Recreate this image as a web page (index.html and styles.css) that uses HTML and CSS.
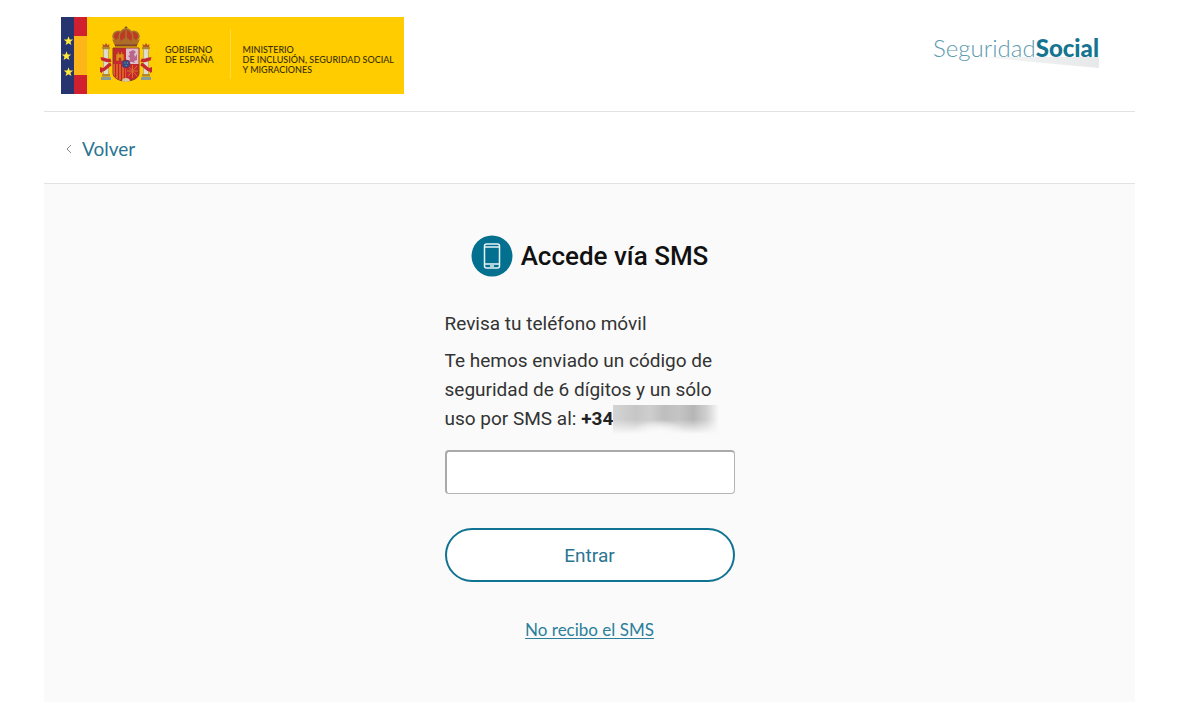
FILE: index.html
```html
<!DOCTYPE html>
<html lang="es">
<head>
    <meta charset="UTF-8">
    <meta name="viewport" content="width=device-width, initial-scale=1.0">
    <title>Accede vía SMS - Seguridad Social</title>
    <link rel="stylesheet" href="styles.css">
</head>
<body>
    <div class="page">
        <header class="header">
            <div class="gob-logo">
                <svg class="gob-emblem" viewBox="0 0 104 77" aria-hidden="true">
                    <!-- EU and Spanish flags -->
                    <rect width="13" height="77" fill="#26346f"></rect>
                    <rect x="13" width="13" height="19" fill="#d01f2e"></rect>
                    <rect x="13" y="19" width="13" height="39" fill="#fcb61a"></rect>
                    <rect x="13" y="58" width="13" height="19" fill="#d01f2e"></rect>
                    <g fill="#ffe93b">
                        <path id="star" d="M7.500 19.200l1.200 3.200 3.500.1-2.700 2.200.9 3.400-2.900-1.900-2.900 1.900.9-3.400-2.700-2.200 3.500-.1z"></path>
                        <use href="#star" x="-2" y="15"></use>
                        <use href="#star" y="31"></use>
                    </g>
                    <!-- pillars -->
                    <g fill="#e0dccb" stroke="#8c8a75" stroke-width=".5">
                        <rect x="42.500" y="32" width="5" height="27"></rect>
                        <rect x="82.500" y="32" width="5" height="27"></rect>
                    </g>
                    <g fill="#b3872b">
                        <rect x="41" y="30" width="8" height="2"></rect>
                        <rect x="81" y="30" width="8" height="2"></rect>
                        <rect x="41" y="57" width="8" height="2.500"></rect>
                        <rect x="81" y="57" width="8" height="2.500"></rect>
                    </g>
                    <path d="M42 30l-.5-3 2 1.200 1.500-2.200 1.500 2.200 2-1.200-.5 3zM82 30l-.5-3 2 1.200 1.500-2.200 1.500 2.200 2-1.200-.5 3z" fill="#b5532a"></path>
                    <g fill="#8a9c96">
                        <rect x="40" y="60" width="10" height="3"></rect>
                        <rect x="80" y="60" width="10" height="3"></rect>
                    </g>
                    <!-- ribbons -->
                    <g fill="none" stroke="#c5282f" stroke-width="3.500">
                        <path d="M40 42c3-1 5 3 10 1M40 53c4 1 5-4 10-6"></path>
                        <path d="M90 42c-3-1-5 3-10 1M90 53c-4 1-5-4-10-6"></path>
                    </g>
                    <path d="M39 50l3 1-1 5-2-1zM91 50l-3 1 1 5 2-1z" fill="#c5282f"></path>
                    <!-- shield -->
                    <path d="M52 31h26v25c0 5-6 8-13 8s-13-3-13-8z" fill="#c5282f" stroke="#8a3c20"></path>
                    <path d="M65 31.500h12.500V47H65z" fill="#dfc0cb"></path>
                    <path d="M52.500 47H65v16.500c-7 0-12.500-3-12.500-7.500z" fill="#e58c20"></path>
                    <path d="M54.500 47v13M57.500 47v15M60.500 47v16M63.500 47v17" stroke="#c5202d" stroke-width="1.800"></path>
                    <path d="M55 44v-7h1.500v-2H58v2h2v-2h1.500v2H63v7h-3v-3h-2v3z" fill="#e08a1e" stroke="#a03c18" stroke-width=".5"></path>
                    <path d="M68 45l1-4-2-2 2-1-1-3 4-2 3 2-2 2 1 3 2-3v6l-3 1 1 2-3-1z" fill="#b9658c"></path>
                    <path d="M67 49l9 10M76 49l-9 10M71.500 48v13M66 54h11" stroke="#d9702a"></path>
                    <path d="M61 64c0-4 8-4 8 0l-4 1z" fill="#d8c8a0"></path>
                    <circle cx="65" cy="47" r="4" fill="#2c4f8a" stroke="#8a2a50"></circle>
                    <path d="M63.500 45.500h1v1h-1zM66 45.500h1v1h-1zM64.700 48h1v1h-1z" fill="#a9a98f"></path>
                    <!-- crown -->
                    <path d="M55 28l-3-8c0-5 5-7 8-5 1-2 3-3 5-3s4 1 5 3c3-2 8 0 8 5l-3 8z" fill="#bd3b25"></path>
                    <path d="M55 25l-3-5c0-5 5-7 8-5 1-2 3-3 5-3s4 1 5 3c3-2 8 0 8 5l-3 5M65 12v13M60 15c-2 2-2 6-1 9M70 15c2 2 2 6 1 9" fill="none" stroke="#a7722a" stroke-width="1.500"></path>
                    <path d="M51 22l3 2 3-3 3 3 5-4 5 4 3-3 3 3 3-2-3 7H54z" fill="#ad6d28"></path>
                    <path d="M54 28.500h22" stroke="#80412a" stroke-width="2"></path>
                    <path d="M65 9v4M63.500 10.500h3" stroke="#8b582a"></path>
                </svg>
                <p class="gob-text">GOBIERNO<br>DE ESPAÑA</p>
                <p class="gob-text gob-ministry">MINISTERIO<br>DE INCLUSIÓN, SEGURIDAD SOCIAL<br>Y MIGRACIONES</p>
            </div>
            <div class="ss-logo">
                <svg class="ss-swoosh" viewBox="0 0 120 11" preserveAspectRatio="none" aria-hidden="true">
                    <defs>
                        <linearGradient id="swoosh">
                            <stop offset="0" stop-color="#f6f7f7"></stop>
                            <stop offset="1" stop-color="#e6e8e9"></stop>
                        </linearGradient>
                    </defs>
                    <path d="M0 0h120v11z" fill="url(#swoosh)"></path>
                </svg>
                <span class="ss-name">Seguridad<strong>Social</strong></span>
            </div>
        </header>

        <nav class="nav">
            <a class="back" href="#">
                <svg class="back-icon" viewBox="0 0 6 10" fill="none" stroke="#8a8a8a" aria-hidden="true">
                    <path d="M5 1L1 5l4 4"></path>
                </svg>
                Volver
            </a>
        </nav>

        <main class="main">
            <h1 class="title">
                <svg class="title-icon" viewBox="0 0 42 42" aria-hidden="true">
                    <circle cx="21" cy="21" r="20.500" fill="#04708f"></circle>
                    <g fill="none" stroke="#e6f3f6" stroke-width="1.500">
                        <rect x="13.500" y="9" width="15" height="24" rx="2"></rect>
                        <path d="M13.500 12h15M13.500 29h15M19 31h4"></path>
                    </g>
                </svg>
                Accede vía SMS
            </h1>
            <form class="form">
                <p class="lead">Revisa tu teléfono móvil</p>
                <label class="text" for="code">Te hemos enviado un código de seguridad de 6 dígitos y un sólo uso por SMS al: <strong class="phone">+34<span class="phone-mask"></span></strong></label>
                <input class="code" type="text" id="code" inputmode="numeric" maxlength="6">
                <button class="submit" type="submit">Entrar</button>
                <a class="help" href="#">No recibo el SMS</a>
            </form>
        </main>
    </div>
</body>
</html>
```

FILE: styles.css
```css
* {
    margin: 0;
    padding: 0;
    box-sizing: border-box;
}

body {
    background-color: #fff;
    color: #333;
    font-family: Roboto, Arial, sans-serif;
    font-size: 19px;
}

.page {
    min-height: 100vh;
    margin: 0 65px 0 44px;
    display: flex;
    flex-direction: column;
}

.header {
    display: flex;
    align-items: flex-start;
    justify-content: space-between;
    padding: 17px 36px 17px 17px;
    border-bottom: 1px solid #e2e2e2;
}

.gob-logo {
    display: flex;
    align-items: center;
    padding-right: 10px;
    background-color: #fc0;
}

.gob-emblem {
    display: block;
    width: 104px;
    height: 77px;
}

.gob-text {
    color: #3a2f00;
    font-family: Lato, sans-serif;
    font-size: 9px;
    font-weight: 500;
    line-height: 10px;
    height: 30px;
    margin-top: 8px;
}

.gob-ministry {
    position: relative;
    margin-left: 16px;
    padding-left: 13px;
}

.gob-ministry::before {
    content: "";
    position: absolute;
    left: 0;
    top: -16px;
    width: 1px;
    height: 50px;
    background-color: #ffd83d;
}

.ss-logo {
    position: relative;
    margin-top: 16px;
    font-family: Lato, sans-serif;
    font-size: 24px;
    line-height: 30px;
    color: #5c9ab0;
}

.ss-name {
    position: relative;
    font-weight: 300;
}

.ss-name strong {
    color: #15748f;
    font-weight: 900;
}

.ss-swoosh {
    position: absolute;
    right: 0;
    bottom: -5px;
    width: 120px;
    height: 11px;
}

.nav {
    display: flex;
    padding: 25px 22px 23px;
    border-bottom: 1px solid #e2e2e2;
}

.back {
    display: flex;
    align-items: center;
    gap: 10px;
    color: #2b7592;
    font-family: Lato, sans-serif;
    font-size: 19px;
    line-height: 23px;
    text-decoration: none;
}

.back-icon {
    width: 6px;
    height: 10px;
}

.main {
    flex: 1;
    display: flex;
    flex-direction: column;
    align-items: center;
    padding: 51px 16px;
    background-color: #fafafa;
}

.title {
    display: flex;
    align-items: center;
    gap: 8px;
    color: #111;
    font-size: 26px;
    font-weight: 500;
    line-height: 42px;
}

.title-icon {
    width: 42px;
    height: 42px;
}

.form {
    display: flex;
    flex-direction: column;
    width: 100%;
    max-width: 290px;
    margin-top: 32px;
    line-height: 29px;
}

.lead {
    margin-bottom: 8px;
}

.phone {
    color: #222;
    font-weight: 700;
    white-space: nowrap;
}

/* hides the rest of the number */
.phone-mask {
    display: inline-block;
    vertical-align: middle;
    width: 106px;
    height: 29px;
    background:
        radial-gradient(ellipse 28px 14px at 46px 100%, #fafafa 20%, transparent),
        linear-gradient(transparent 50%, #fafafa),
        linear-gradient(90deg, #d4d4d4, #c6c6c6 22%, #cecece 35%, #bebebe 48%, #c4c4c4 62%, #b6b6b6 76%, #cfcfcf 88%, #fafafa);
}

.code {
    height: 44px;
    margin-top: 16px;
    padding: 0 12px;
    background-color: #fff;
    border: 1px solid #b5b5b5;
    border-top: 2px solid #aaa;
    border-left: 2px solid #aaa;
    border-radius: 4px;
    color: #333;
    font: inherit;
}

.submit {
    height: 54px;
    margin-top: 34px;
    background-color: #fff;
    border: 2px solid #0f7391;
    border-radius: 27px;
    color: #2b7592;
    font: inherit;
    cursor: pointer;
}

.help {
    align-self: center;
    margin-top: 33px;
    color: #2b7f9b;
    font-family: Lato, sans-serif;
    font-size: 17px;
    text-underline-offset: 2px;
}
```
